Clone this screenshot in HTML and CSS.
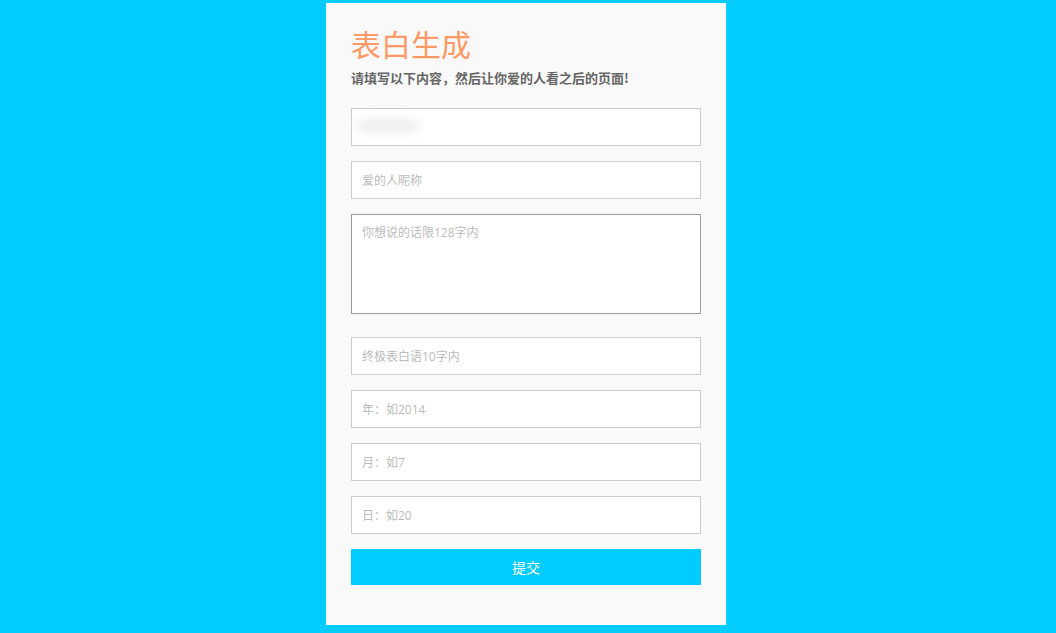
FILE: index.html
```html
<!DOCTYPE html>
<html lang="zh">
<head>
<meta charset="utf-8">
<title>表白生成</title>
<link rel="stylesheet" href="styles.css">
</head>
<body>
<div class="page">
  <form class="card">
    <h1 class="title">表白生成</h1>
    <p class="subtitle">请填写以下内容，然后让你爱的人看之后的页面!</p>
    <div class="field field-first">
      <input class="input" type="text">
      <span class="blur-blob"></span>
    </div>
    <div class="field"><input class="input" type="text" placeholder="爱的人昵称"></div>
    <div class="field field-area"><textarea class="area" placeholder="你想说的话限128字内"></textarea></div>
    <div class="field"><input class="input" type="text" placeholder="终极表白语10字内"></div>
    <div class="field"><input class="input" type="text" placeholder="年：如2014"></div>
    <div class="field"><input class="input" type="text" placeholder="月：如7"></div>
    <div class="field"><input class="input" type="text" placeholder="日：如20"></div>
    <button class="submit" type="button">提交</button>
  </form>
</div>
</body>
</html>
```
FILE: styles.css
```css
html, body {
  margin: 0;
  padding: 0;
  background: #00ccff;
  height: 100%;
  overflow: hidden;
}
body {
  font-family: "Noto Sans CJK SC", "Noto Sans", sans-serif;
}
.page {
  display: flex;
  justify-content: center;
  padding-right: 4px;
  padding-top: 3px;
}
.card {
  width: 400px;
  box-sizing: border-box;
  background: #f9f9f9;
  padding: 20px 25px 40px;
  display: flex;
  flex-direction: column;
}
.title {
  margin: 0;
  font-size: 30px;
  line-height: 40px;
  font-weight: normal;
  color: #ff9966;
}
.subtitle {
  margin: 5px 0 0;
  font-size: 13px;
  line-height: 20px;
  font-weight: bold;
  color: #666;
}
.field {
  position: relative;
  margin-top: 15px;
}
.field-first {
  margin-top: 20px;
}
.field-area + .field {
  margin-top: 23px;
}
.input, .area {
  display: block;
  width: 100%;
  box-sizing: border-box;
  border: 1px solid #cccccc;
  background: #fff;
  padding: 0 10px;
  font-family: "Open Sans", "Noto Sans CJK SC", sans-serif;
  font-size: 12px;
  color: #555;
  outline: none;
  margin: 0;
}
.input {
  height: 38px;
}
.area {
  height: 100px;
  padding-top: 8px;
  border-color: #999999;
  resize: none;
  line-height: 20px;
}
.input::placeholder, .area::placeholder {
  color: #bbbbbb;
}
.blur-blob {
  position: absolute;
  left: 6px;
  top: 10px;
  width: 62px;
  height: 16px;
  border-radius: 8px;
  background: #f1f1f1;
  filter: blur(4px);
}
.submit {
  margin-top: 15px;
  height: 36px;
  border: 0;
  background: #00ccff;
  color: #fff;
  font-family: "Noto Sans CJK SC", sans-serif;
  font-size: 14px;
  cursor: pointer;
}
```
